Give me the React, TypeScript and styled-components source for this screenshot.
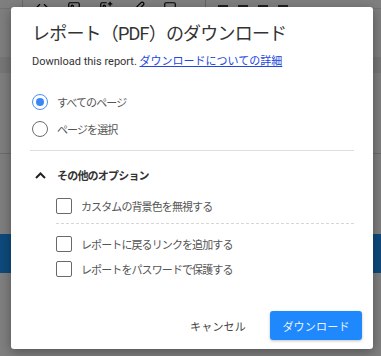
import { createGlobalStyle } from "styled-components";
import styled from "styled-components";
import { Code, Image, ImagePlus, Pen, Square } from "lucide-react";

const GlobalStyle = createGlobalStyle`
  html, body {
    margin: 0;
    padding: 0;
  }
  body {
    font-family: Roboto, "Noto Sans CJK JP", sans-serif;
  }
`;

const Screen = styled.div`
  position: relative;
  width: 381px;
  height: 356px;
  overflow: hidden;
  background: #ffffff;
`;

const AppBehind = styled.div`
  display: flex;
  flex-direction: column;
  height: 100%;
`;

const Toolbar = styled.div`
  display: flex;
  align-items: flex-end;
  height: 8px;
  overflow: hidden;
  border-bottom: 1px solid #e6e6e6;
`;

const ToolGroup = styled.div`
  display: flex;
  align-items: flex-end;
  gap: 18px;
  padding-left: 12px;
  height: 100%;
  border-left: 1px solid #d0d0d0;
  margin-left: 22px;
  color: #000;
  & svg {
    margin-bottom: -7px;
  }
`;

const ToolDivider = styled.div`
  width: 1px;
  height: 100%;
  background: #c8c8c8;
  margin-left: 28px;
`;

const MenuText = styled.div`
  display: flex;
  gap: 10px;
  margin-left: 12px;
  padding-bottom: 1px;
  & span {
    width: 10px;
    height: 2px;
    background: #404040;
  }
`;

const Band = styled.div<{ $h: number; $bg: string }>`
  height: ${(p) => p.$h}px;
  background: ${(p) => p.$bg};
  flex-shrink: 0;
`;

const Overlay = styled.div`
  position: absolute;
  inset: 0;
  background: rgba(0, 0, 0, 0.5);
  display: flex;
  align-items: flex-start;
  padding: 7px 0 0 11px;
`;

const Dialog = styled.div`
  width: 362px;
  height: 342px;
  box-sizing: border-box;
  background: #fff;
  border-radius: 3px;
  box-shadow: 0 3px 12px rgba(0, 0, 0, 0.35);
  padding: 14px 11px 9px 21px;
  display: flex;
  flex-direction: column;
  color: #3c3c3c;
`;

const Title = styled.h1`
  margin: 0;
  font-size: 18px;
  line-height: 26px;
  font-weight: 400;
  letter-spacing: -0.8px;
  color: #333;
`;

const Subtitle = styled.p`
  margin: 7px 0 0;
  font-size: 11px;
  line-height: 16px;
  color: #333;
  & a {
    color: #2347e0;
    text-decoration: underline;
  }
`;

const RadioGroup = styled.div`
  display: flex;
  flex-direction: column;
  gap: 1px;
  margin-top: 19px;
  padding-right: 8px;
`;

const Row = styled.label<{ $indent?: number; $h?: number }>`
  display: flex;
  align-items: center;
  gap: 9px;
  height: ${(p) => p.$h ?? 26}px;
  padding-left: ${(p) => p.$indent ?? 0}px;
  font-size: 11px;
  letter-spacing: -0.9px;
  color: #555;
`;

const Radio = styled.span<{ $checked?: boolean }>`
  width: 16px;
  height: 16px;
  box-sizing: border-box;
  border-radius: 50%;
  border: 1.5px solid ${(p) => (p.$checked ? "#4a90f5" : "#6e6e6e")};
  display: flex;
  align-items: center;
  justify-content: center;
  flex-shrink: 0;
  &::after {
    content: "";
    width: 8px;
    height: 8px;
    border-radius: 50%;
    background: #3b86f5;
    display: ${(p) => (p.$checked ? "block" : "none")};
  }
`;

const Divider = styled.hr`
  margin: 8px 8px 0 -2px;
  border: none;
  border-top: 1px solid #dddddd;
`;

const SectionHeader = styled.div`
  display: flex;
  align-items: center;
  gap: 9px;
  height: 20px;
  margin-top: 14px;
  font-size: 11px;
  font-weight: 700;
  letter-spacing: -0.8px;
  color: #333;
`;

const ChevronBox = styled.span`
  width: 16px;
  height: 16px;
  display: flex;
  align-items: center;
  justify-content: center;
`;

const Options = styled.div`
  display: flex;
  flex-direction: column;
  margin-top: 11px;
  padding-right: 8px;
`;

const Checkbox = styled.span`
  width: 16px;
  height: 16px;
  box-sizing: border-box;
  border: 1px solid #6a6a6a;
  border-radius: 2px;
  flex-shrink: 0;
`;

const Dashed = styled.div`
  margin: 7px 0 10px 24px;
  border-top: 1px dashed #d6d6d6;
`;

const OptionStack = styled.div`
  display: flex;
  flex-direction: column;
  gap: 5px;
`;

const Footer = styled.div`
  margin-top: auto;
  display: flex;
  justify-content: flex-end;
  align-items: center;
  gap: 12px;
`;

const TextButton = styled.button`
  background: none;
  border: none;
  padding: 0 12px;
  height: 29px;
  font-family: inherit;
  font-size: 11px;
  letter-spacing: 0.2px;
  color: #444;
`;

const PrimaryButton = styled.button`
  width: 92px;
  height: 29px;
  border: none;
  border-radius: 3px;
  background: #1e88fc;
  color: #eaf3ff;
  font-family: inherit;
  font-size: 11px;
  letter-spacing: 0.2px;
  box-shadow: 0 1px 3px rgba(0, 0, 0, 0.25);
`;

export default function App() {
  return (
    <Screen>
      <GlobalStyle />
      <AppBehind>
        <Toolbar>
          <ToolGroup>
            <Code size={14} strokeWidth={2} />
            <Image size={14} strokeWidth={2} />
            <ImagePlus size={14} strokeWidth={2} />
            <Pen size={14} strokeWidth={2} />
            <Square size={14} strokeWidth={2} />
          </ToolGroup>
          <ToolDivider />
          <MenuText>
            <span />
            <span />
            <span />
            <span />
          </MenuText>
        </Toolbar>
        <Band $h={48} $bg="#fdfdfd" />
        <Band $h={16} $bg="#ececec" />
        <Band $h={80} $bg="#fdfdfd" />
        <Band $h={1} $bg="#d8d8d8" />
        <Band $h={80} $bg="#fdfdfd" />
        <Band $h={39} $bg="#1c94f8" />
      </AppBehind>
      <Overlay>
        <Dialog role="dialog">
          <Title>レポート（PDF）のダウンロード</Title>
          <Subtitle>
            Download this report. <a href="#">ダウンロードについての詳細</a>
          </Subtitle>
          <RadioGroup>
            <Row>
              <Radio $checked />
              すべてのページ
            </Row>
            <Row>
              <Radio />
              ページを選択
            </Row>
          </RadioGroup>
          <Divider />
          <SectionHeader>
            <ChevronBox>
              <svg width="11" height="7" viewBox="0 0 11 7">
                <path d="M1 6 L5.5 1.5 L10 6" fill="none" stroke="#222" strokeWidth="2" />
              </svg>
            </ChevronBox>
            その他のオプション
          </SectionHeader>
          <Options>
            <Row $indent={24} $h={20}>
              <Checkbox />
              カスタムの背景色を無視する
            </Row>
            <Dashed />
            <OptionStack>
              <Row $indent={24} $h={20}>
                <Checkbox />
                レポートに戻るリンクを追加する
              </Row>
              <Row $indent={24} $h={20}>
                <Checkbox />
                レポートをパスワードで保護する
              </Row>
            </OptionStack>
          </Options>
          <Footer>
            <TextButton>キャンセル</TextButton>
            <PrimaryButton>ダウンロード</PrimaryButton>
          </Footer>
        </Dialog>
      </Overlay>
    </Screen>
  );
}
